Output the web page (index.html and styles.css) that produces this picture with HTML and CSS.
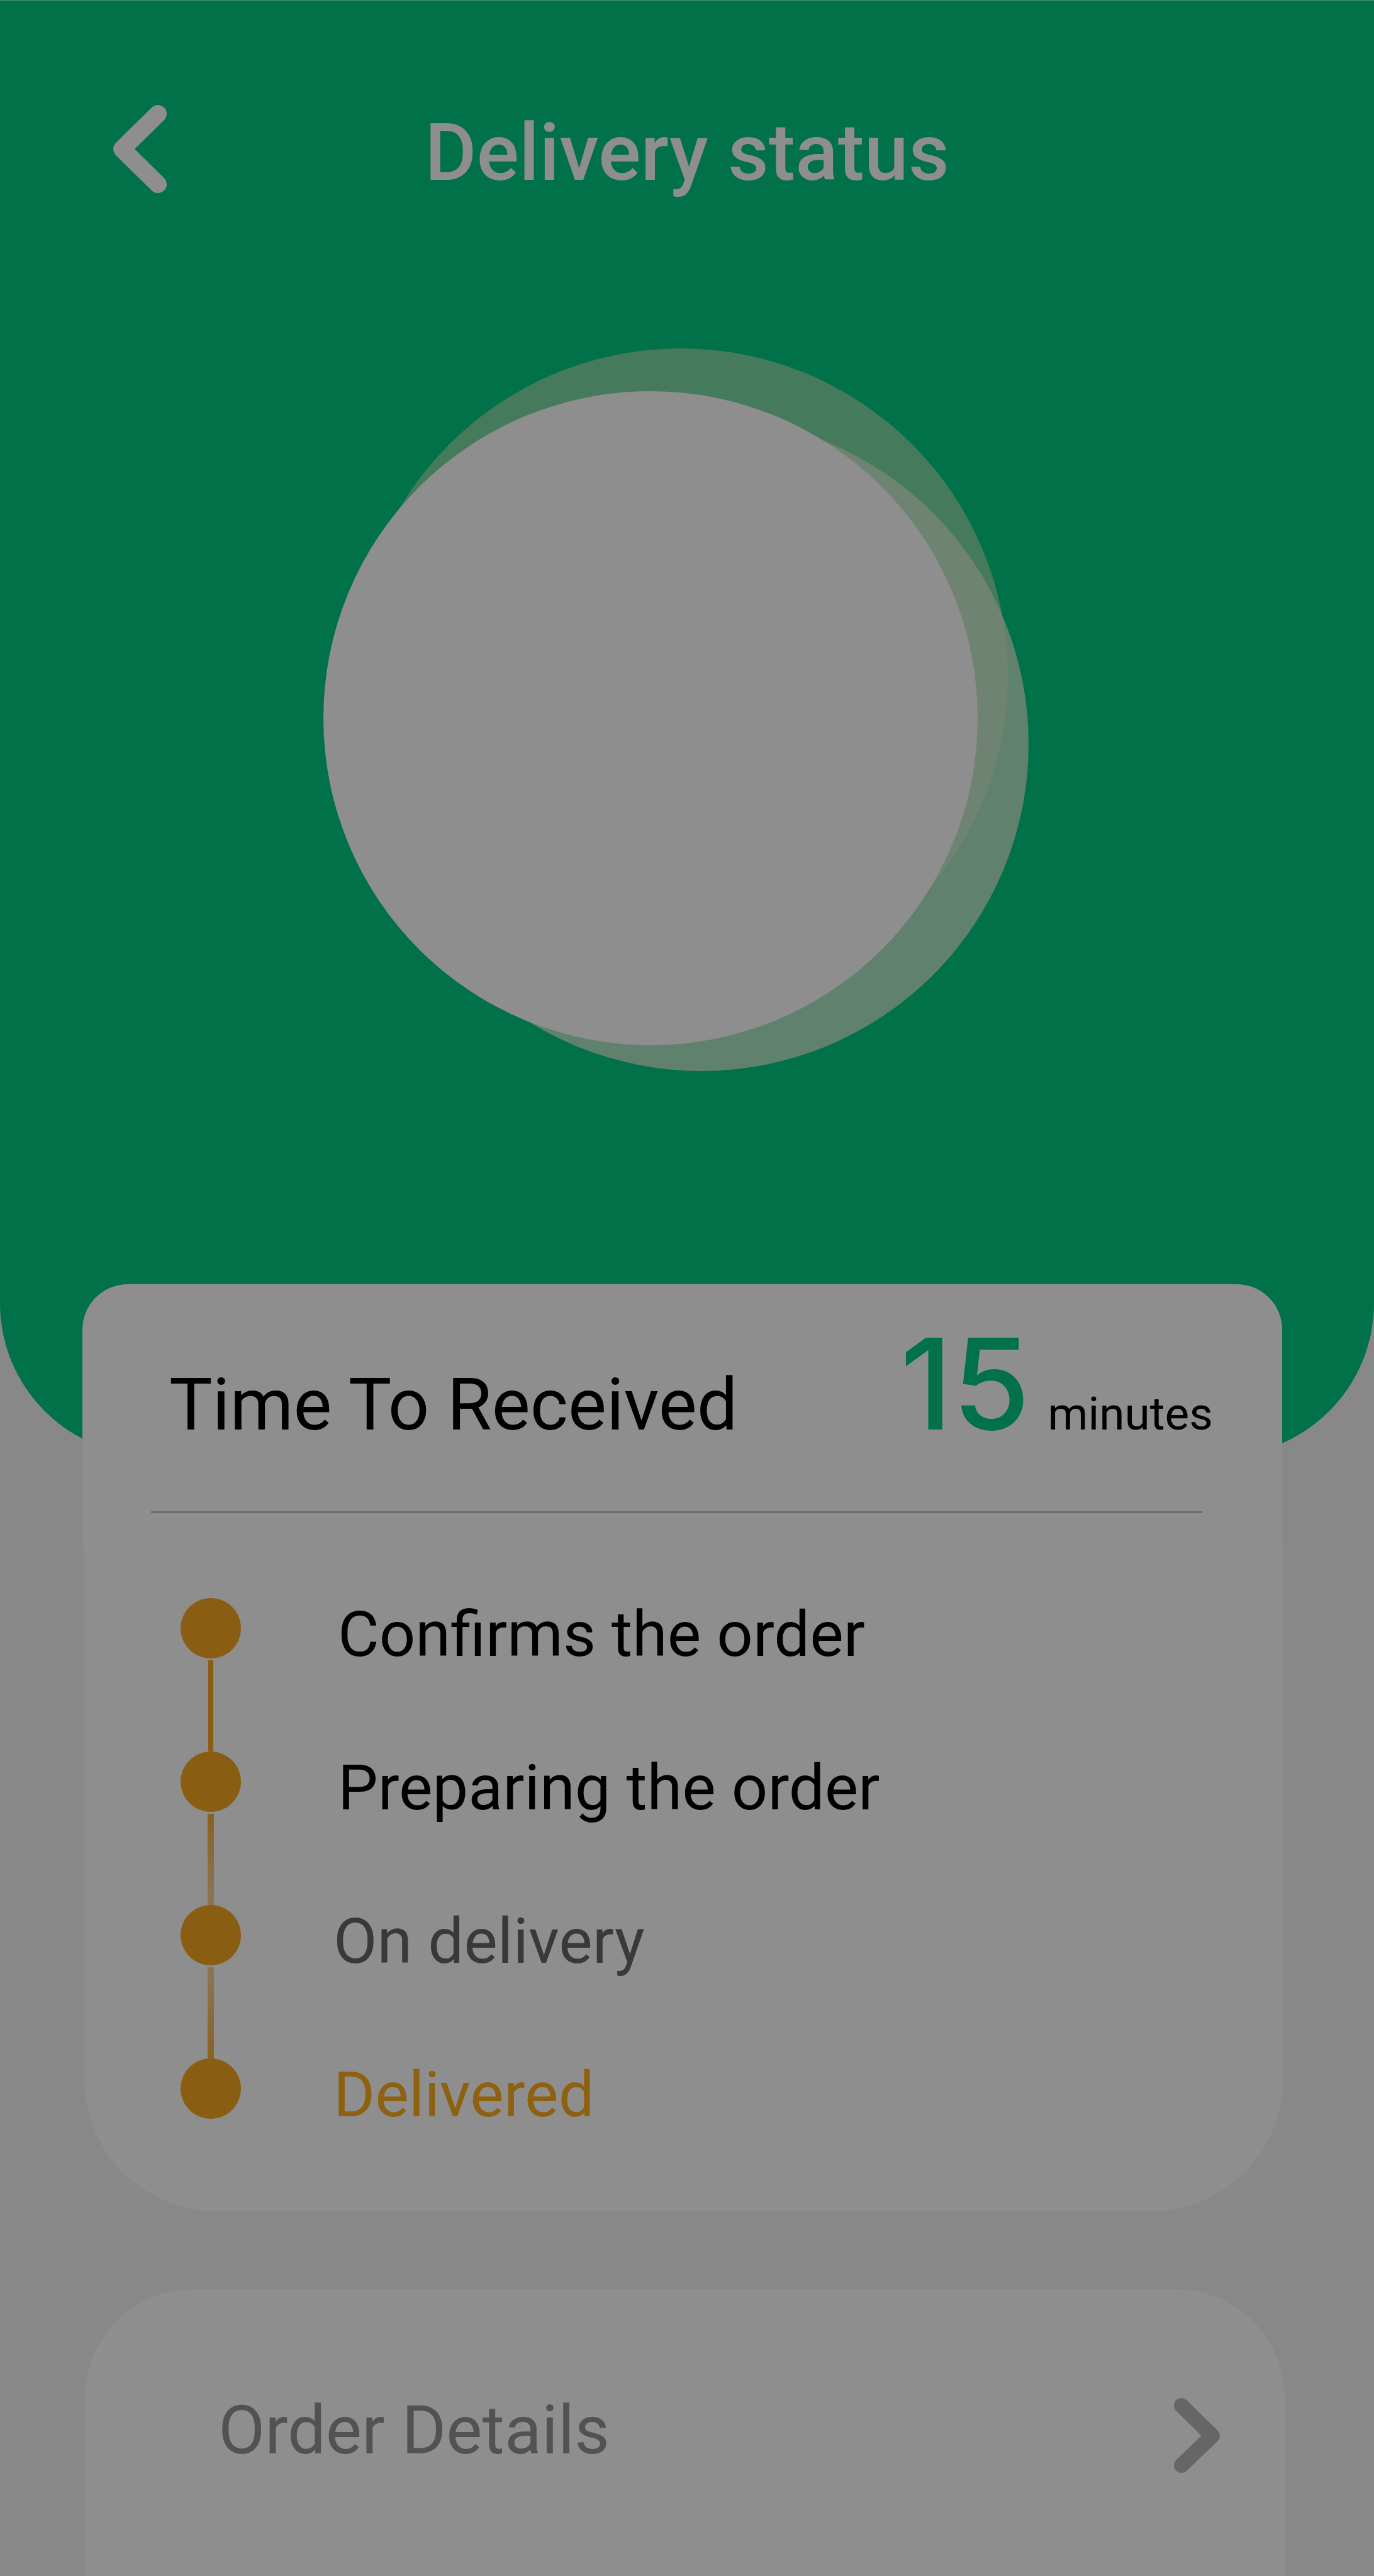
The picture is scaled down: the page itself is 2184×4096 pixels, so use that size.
FILE: index.html
```html
<!DOCTYPE html>
<html lang="en">
<head>
  <meta charset="utf-8">
  <meta name="viewport" content="width=device-width, initial-scale=1">
  <title>Delivery status</title>
  <link rel="stylesheet" href="styles.css">
</head>
<body>
  <div class="page">
    <header class="hero">
      <div class="topbar">
        <button class="back" type="button" aria-label="Back">
          <svg width="86" height="140" viewBox="0 0 86 140" aria-hidden="true">
            <path d="M71 14 14 70l57 56" fill="none" stroke="#8e8e8e" stroke-width="28" stroke-linecap="round" stroke-linejoin="round"/>
          </svg>
        </button>
        <h1 class="title">Delivery status</h1>
      </div>
      <div class="art">
        <svg width="1122" height="1150" viewBox="0 0 1122 1150" aria-hidden="true">
          <circle cx="569" cy="521" r="520" fill="#457b5c"/>
          <circle cx="602" cy="630" r="520" fill="#798679" fill-opacity=".8"/>
          <circle cx="521" cy="589" r="520" fill="#8e8e8e"/>
        </svg>
      </div>
    </header>

    <main class="content">
      <section class="status">
        <div class="status-head">
          <div class="eta">
            <h2 class="eta-label">Time To Received</h2>
            <p class="eta-time"><span class="eta-value">15</span><span class="eta-unit">minutes</span></p>
          </div>
          <hr class="divider">
        </div>
        <ol class="steps">
          <li class="step"><span class="marker"><i class="dot"></i><i class="line"></i></span><span class="step-text">Confirms the order</span></li>
          <li class="step"><span class="marker"><i class="dot"></i><i class="line line-out"></i></span><span class="step-text">Preparing the order</span></li>
          <li class="step step-late"><span class="marker"><i class="dot"></i><i class="line line-in"></i></span><span class="step-text muted">On delivery</span></li>
          <li class="step step-late"><span class="marker"><i class="dot"></i></span><span class="step-text accent">Delivered</span></li>
        </ol>
      </section>

      <section class="details">
        <a class="details-link" href="#details">
          <span>Order Details</span>
          <svg width="73" height="119" viewBox="0 0 73 119" aria-hidden="true">
            <path d="M12 12 61 60 12 107" fill="none" stroke="#666" stroke-width="24" stroke-linecap="round" stroke-linejoin="round"/>
          </svg>
        </a>
      </section>
    </main>
  </div>
</body>
</html>
```

FILE: styles.css
```css
* {
  box-sizing: border-box;
  margin: 0;
  padding: 0;
}

body {
  background: #888;
  color: #000;
  font-family: Roboto, "Liberation Sans", sans-serif;
}

.page {
  display: flex;
  flex-direction: column;
  min-height: 100vh;
}

.hero {
  padding-bottom: 612px;
  border-top: 1px solid #4b9673;
  background: #007148;
  border-radius: 0 0 243px 243px;
}

.topbar {
  display: grid;
  grid-template-columns: 1fr auto 1fr;
  align-items: end;
  padding: 166px 180px 0;
}

.back {
  justify-self: start;
  border: 0;
  background: none;
  cursor: pointer;
}

.back svg,
.art svg,
.details svg {
  display: block;
}

.title {
  color: #8e8e8e;
  font-size: 126px;
  font-weight: 500;
  line-height: 128px;
}

.art {
  display: flex;
  justify-content: center;
  margin-top: 246px;
  padding-right: 36px;
}

.content {
  display: flex;
  flex: 1;
  flex-direction: column;
  gap: 124px;
  margin: -273px 144px 0 134px;
}

.status-head {
  margin: 0 2px 0 -3px;
  padding: 58px 0 55px;
  background: #8e8e8e;
  border-radius: 72px 72px 0 0;
}

.eta {
  display: flex;
  align-items: baseline;
  justify-content: space-between;
  height: 206px;
  padding: 0 110px 0 138px;
}

.eta-label {
  font-size: 115px;
  font-weight: 400;
  line-height: 136px;
}

.eta-time {
  display: flex;
  align-items: baseline;
  gap: 28px;
}

.eta-value {
  color: #007148;
  font-family: Inter, Roboto, sans-serif;
  font-size: 200px;
  font-weight: 500;
  line-height: 200px;
}

.eta-unit {
  font-size: 73px;
}

.divider {
  height: 3px;
  margin: 97px 127px 0 109px;
  border: 0;
  background: #6b6b6b;
}

.steps {
  padding: 80px 153px 147px;
  background: #8e8e8e;
  border-radius: 0 0 210px 210px;
  list-style: none;
}

.step {
  display: flex;
  gap: 154px;
  height: 244px;
}

.step-late {
  gap: 147px;
}

.step:last-child {
  height: 96px;
}

.marker {
  display: flex;
  flex-direction: column;
  align-items: center;
  gap: 3px;
  width: 96px;
}

.dot {
  width: 96px;
  height: 96px;
  border-radius: 50%;
  background: #8a5e12;
}

.line {
  flex: 1;
  width: 8px;
  background: #8a5e12;
}

.line-out {
  width: 10px;
  background: linear-gradient(#8a6220, #8c7555);
}

.line-in {
  width: 10px;
  background: linear-gradient(#8c7555, #8a6220);
}

.step-text {
  font-size: 101px;
  line-height: 116px;
}

.muted {
  color: #3a3838;
}

.accent {
  color: #8e6110;
}

.details {
  flex: 1;
  margin: 0 -2px 0 1px;
  padding: 156px 103px 164px 212px;
  background: #8e8e8e;
  border-radius: 172px 172px 0 0;
}

.details-link {
  display: flex;
  align-items: flex-end;
  justify-content: space-between;
  color: #525252;
  font-size: 108px;
  line-height: 136px;
  text-decoration: none;
}
```
